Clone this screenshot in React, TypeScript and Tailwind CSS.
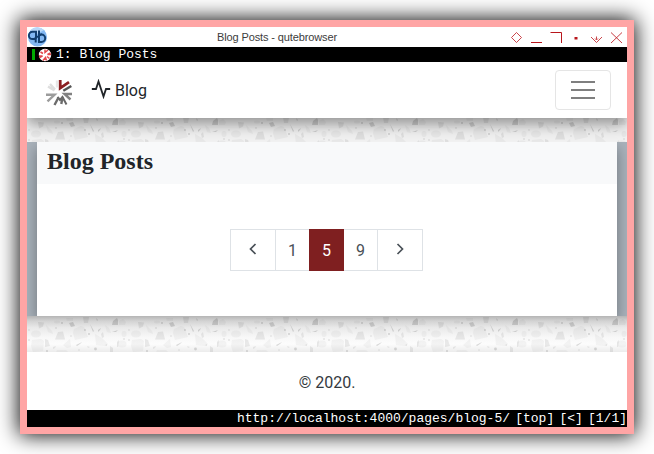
import React from "react";

function Terrazzo({ id, height, offset }: { id: string; height: number; offset: number }) {
  return (
    <svg width="600" height={height} className="block">
      <defs>
        <pattern id={id} width="100" height="100" y={offset} patternUnits="userSpaceOnUse">
          <g fill="#000" fillOpacity=".035">
            <path d="M47 13l7-3 3 1 4 10-13 3-2-7z" />
            <path d="M5 24l9-1 3 2-1 10-10 1-2-6z" />
            <path d="M68 18l7 4 6 6-2 2-10-1z" />
            <path d="M19 9l6 6 1 3-5-2z" />
            <path d="M43 23l1 8-4 1-4-3z" />
            <path d="M78 9l4 3 2 5-4-1z" />
            <ellipse cx="9" cy="18" rx="5" ry="3.5" />
            <ellipse cx="95" cy="28" rx="4.500" ry="3.5" />
            <ellipse cx="30" cy="6" rx="3" ry="1.6" />
            <ellipse cx="97" cy="18" rx="2.500" ry="3" />
            <path d="M39 2h7v3h-6zM92 5l4-2 3 3-1 3h-6zM30 34h9l3 3H29z" />
          </g>
          <g fill="#000" fillOpacity=".075">
            <path d="M31 16l5-.5 2 8h-10z" />
            <path d="M11 6l6 .5-1 4-4 2z" />
            <path d="M56 1h6l-1 6h-4zM18 23l3 1 2 6-5 1zM83 30l3 2v5l-3-1z" />
            <path d="M26 31l3-1-1 2-2 1zM90 26l2-2-1 7h-1zM60 30l3 1-2 1zM74 18l2-2 1 5-2 1z" />
          </g>
          <g fill="#000" fillOpacity=".14">
            <path d="M42 7l4-1 2 4-4 1z" />
            <path d="M86 5l4-3 1 2v5h-6z" />
            <circle cx="68.5" cy="33" r="1.4" />
            <path d="M49 29l6-3-2 2-3 2zM85 16l6-2-2 2h-3zM71 14l3-2-1 2-2 2zM63 8l4 7-1 1zM69 2l2 2-1 1zM78 29l2-.5v1z" />
            <circle cx="2" cy="14" r=".7" /><circle cx="2" cy="24" r=".8" />
            <circle cx="29" cy="12" r=".8" /><circle cx="35" cy="7" r="1" />
            <circle cx="58" cy="14" r=".9" /><circle cx="44" cy="20" r=".7" />
            <circle cx="62" cy="18" r="1" /><circle cx="52" cy="34" r=".7" />
            <circle cx="97" cy="23" r=".8" /><circle cx="20" cy="35" r="1" />
          </g>
        </pattern>
      </defs>
      <rect width="600" height={height} fill={`url(#${id})`} />
    </svg>
  );
}

function WindowButtons() {
  return (
    <svg width="118" height="20" fill="none" stroke="#c1272d" strokeWidth="1" className="ml-0.5 shrink-0">
      <path d="M7.500 5.500l5 5-5 5-5-5z" strokeOpacity=".85" />
      <path d="M22 15.500h11M41.500 5.500h11V16" stroke="#b8161c" />
      <rect x="65.500" y="10" width="3" height="2.500" fill="#b8161c" stroke="none" />
      <path d="M82 10l5.500 5.500 5.500-5.500M87.500 9.500v3M86 11.500l1.500 1.500 1.500-1.500" strokeOpacity=".85" />
      <path d="M102 5.500l11 10.500M113 5.500l-11 10.500" strokeOpacity=".9" />
    </svg>
  );
}

function AppIcon() {
  return (
    <svg width="20" height="20" viewBox="0 0 20 20" fill="none" className="shrink-0">
      <circle cx="10.500" cy="10" r="9.500" fill="#83b8f3" />
      <path d="M3 3.500A9.500 9.500 0 0 1 17 3l-7 4z" fill="#b9d8f8" />
      <g stroke="#123f70" strokeWidth="2">
        <path d="M8.700 15.500V12H5.500a3.600 3.600 0 0 1 0-7.200H9V11.500" />
        <path d="M12 3.500V7.500h2.500a3.700 3.700 0 0 1 0 7.400H12V8.500" />
        <path d="M6 12.500l9-5.500" strokeWidth="1.500" />
      </g>
    </svg>
  );
}

function Favicon() {
  return (
    <svg width="14" height="14" viewBox="0 0 14 14">
      <circle cx="7" cy="7" r="6.200" fill="#fff" />
      <g stroke="#e2474b" strokeWidth="1.500" fill="none">
        <path d="M7 1.500V4.500L10 2M12.500 5L9.500 6.500H13M11.500 10.500L9 8.500M8.500 12.500L7.500 9.500 5 12.500M1.500 9.500L4.500 8H1M2.500 4l2.500 1.500" />
      </g>
    </svg>
  );
}

function SiteLogo() {
  return (
    <svg width="28" height="28" viewBox="0 0 28 28" fill="none" strokeWidth="2.400">
      <path d="M15.200 1v8.200l8.800-6" stroke="#8b1f22" strokeWidth="2.800" />
      <path d="M18.300 11.800l8-4.800" stroke="#555" />
      <path d="M27 15h-7.500l6 5.500" stroke="#828282" />
      <path d="M21.500 25.500L17.500 18l-2.500 3-2.500-3" stroke="#666" strokeWidth="2" />
      <path d="M17.500 18l-1.200 7M13.500 18.500L9.500 26" stroke="#6c6c6c" />
      <path d="M1 15.800h8.500l-7 6.500" stroke="#9c9c9c" />
      <path d="M3 7.500l6.500 4M5 5l5 5.500" stroke="#dedede" />
      <path d="M12 1.500v7" stroke="#e8e8e8" />
    </svg>
  );
}

export default function App() {
  return (
    <div className="h-[454px] w-[654px] overflow-hidden bg-white p-5 font-[Roboto,sans-serif] text-[#212529]">
      <div className="h-[414px] w-[614px] border-[7px] border-[#ffa5a5] shadow-[0_0_20px_1px_rgba(0,0,0,0.98)]">
        <header className="flex h-5 items-center bg-white">
          <AppIcon />
          <h1 className="w-[460px] text-center font-['Liberation_Sans',sans-serif] text-[11px] leading-5 tracking-[-0.125px] text-[#3c3c3c]">
            Blog Posts - qutebrowser
          </h1>
          <WindowButtons />
        </header>
        <div className="flex h-[15px] items-center bg-black font-['Liberation_Mono',monospace] text-[13px] leading-[15px] text-white">
          <span className="ml-[5px] h-[11px] w-[3px] bg-[#00aa00]" />
          <span className="ml-[3px] mr-1 mt-px"><Favicon /></span>
          <span>1: Blog Posts</span>
        </div>
        <nav className="relative flex h-14 items-center justify-between bg-white pl-[18px] pr-4 shadow-[0_6px_14px_rgba(0,0,0,0.4)] [clip-path:inset(0_0_-24px_0)]">
          <div className="flex items-center">
            <span className="mt-[5px]"><SiteLogo /></span>
            <svg width="20" height="20" viewBox="0 0 24 24" fill="none" stroke="#212529" strokeWidth="2.200" className="-mt-[3px] ml-[18px]">
              <path d="M1 12h5L9 3l6 18 3-9h5" />
            </svg>
            <span className="ml-1 pt-0.5 text-base leading-6">Blog</span>
          </div>
          <button className="flex h-10 w-14 items-center justify-center rounded-[4px] border border-[#e5e5e5]" aria-label="Menu">
            <svg width="24" height="20" stroke="#7f7f7f" strokeWidth="2">
              <path d="M0 2h24M0 10h24M0 18h24" />
            </svg>
          </button>
        </nav>
        <div className="h-6 bg-[#f1f1f1]"><Terrazzo id="terrazzo-top" height={24} offset={-2} /></div>
        <div className="h-[174px] overflow-hidden bg-[#a9b2bb] px-[10px]">
          <main className="h-[174px] bg-white shadow-[0_6px_14px_rgba(0,0,0,0.35)]">
            <h2 className="h-[42px] bg-[#f8f9fa] pl-[10px] pt-[5px] font-['Liberation_Serif',serif] text-2xl font-bold leading-[29px]">Blog Posts</h2>
            <div className="flex justify-center pr-px pt-[45px]">
              <ul className="flex h-[42px] text-base leading-[41px] text-[#495057]">
                <li className="flex w-[46px] items-center justify-center border border-[#dee2e6]">
                  <svg width="8" height="12" viewBox="0 0 8 12" fill="none" stroke="#495057" strokeWidth="1.700" className="-mt-[2px]"><path d="M6.500 1L1.500 6l5 5" /></svg>
                </li>
                <li className="w-[34px] border-y border-r border-[#dee2e6] text-center">1</li>
                <li className="-ml-px w-[35px] bg-[#7f1f20] pt-px text-center text-white">5</li>
                <li className="w-[34px] border-y border-r border-[#dee2e6] text-center">9</li>
                <li className="flex w-[45px] items-center justify-center border-y border-r border-[#dee2e6]">
                  <svg width="8" height="12" viewBox="0 0 8 12" fill="none" stroke="#495057" strokeWidth="1.700" className="-mt-[2px]"><path d="M1.500 1l5 5-5 5" /></svg>
                </li>
              </ul>
            </div>
          </main>
        </div>
        <div className="h-9 bg-[linear-gradient(#b5b5b5_0%,#d3d3d3_14%,#e9e9e9_32%,#f8f8f8_60%,#fcfcfc_78%,#ececec_100%)]">
          <Terrazzo id="terrazzo-bottom" height={36} offset={0} />
        </div>
        <footer className="h-[58px] bg-white pt-[19px] text-center text-base leading-6 text-[#343a40]">© 2020.</footer>
        <div className="flex h-[17px] justify-end gap-[5.200px] bg-black font-['Liberation_Mono',monospace] text-[13px] leading-[17px] text-white">
          <span>http://localhost:4000/pages/blog-5/</span>
          <span>[top]</span>
          <span>[&lt;]</span>
          <span>[1/1]</span>
        </div>
      </div>
    </div>
  );
}
